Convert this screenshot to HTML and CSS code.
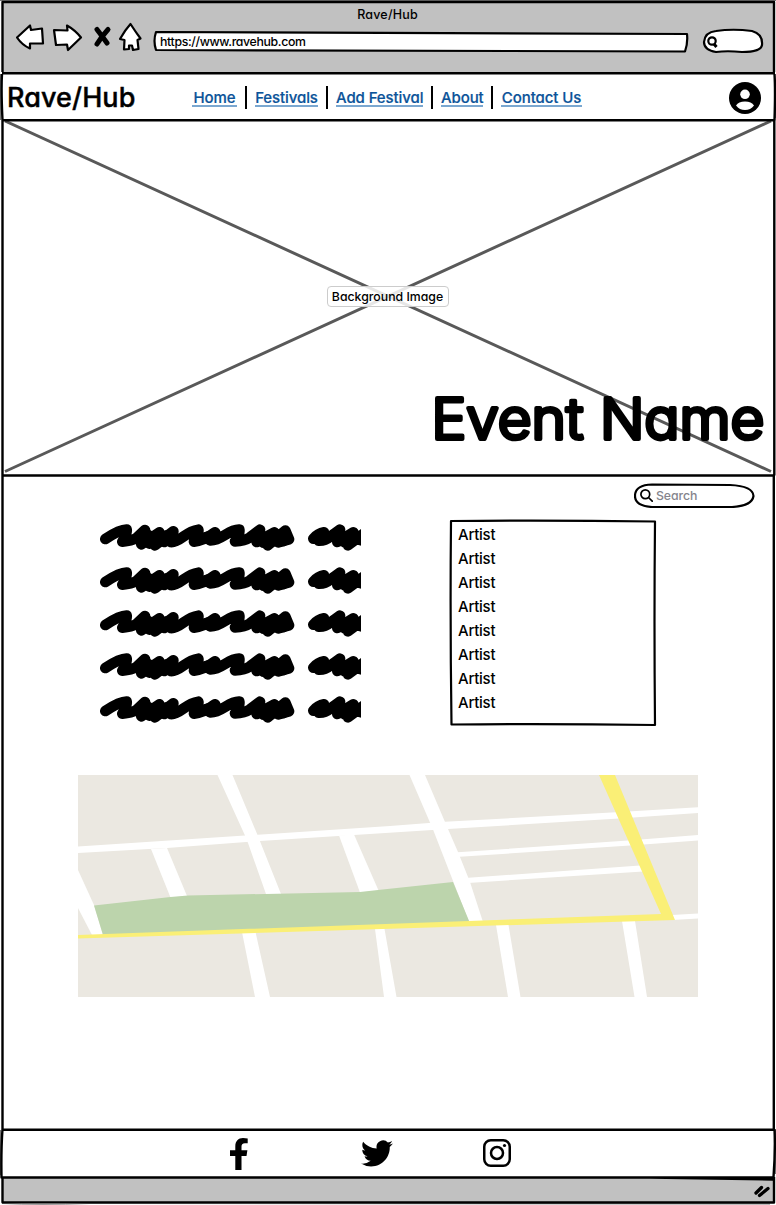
FILE: index.html
```html
<!DOCTYPE html>
<html lang="en">
<head>
<meta charset="utf-8">
<title>Rave/Hub</title>
<link rel="stylesheet" href="styles.css">
</head>
<body>
<div class="window">
  <header class="chrome">
    <div class="chrome-title">Rave/Hub</div>
    <div class="toolbar">
      <svg class="tools" viewBox="0 0 134 34" width="134" height="34" fill="#fff" stroke="#000" stroke-width="2.2" stroke-linejoin="round">
        <path d="M1 17.500L14 5.500L15 10L26 8.500L27 23.500L14 23.500V28.500Q6 25 1 17.500Z"/>
        <path d="M38 10L51.500 10.500L51 5.500Q59 10 65 17.500L52 30L51 24.500L40 25Z"/>
        <path d="M81 9.500Q86 16 91 23M92 9.500Q86 16 81 24" fill="none" stroke-width="5" stroke-linecap="round"/>
        <path d="M114.500 4Q119 11 124.500 18.500L121.500 20L122.500 29L117 30L116 25.500H113V29L108 29.500L108.500 20L104 19Q109 10 114.500 4Z"/>
      </svg>
      <div class="address">
        <svg class="outline" viewBox="0 0 536 24" width="536" height="24"><path d="M3 2L534 4Q535 13 532 21.500L3 20Q0 11 3 2Z"/></svg>
        <span class="url">https://www.ravehub.com</span>
      </div>
      <svg class="quick" viewBox="0 0 62 26" width="62" height="26" fill="#fff" stroke="#000" stroke-width="2.200">
        <path d="M14 3Q31 .500 50 3Q61 6 60 17Q59 24 40 24Q25 22.500 14 24Q2 22 2 14Q3 4 14 3Z"/>
        <circle cx="10" cy="13" r="3.700"/><path d="M12 16L14.500 19" stroke-width="3"/>
      </svg>
    </div>
  </header>

  <nav class="nav">
    <div class="brand">Rave/Hub</div>
    <div class="links">
      <a class="link home">Home</a><i class="sep"></i>
      <a class="link festivals">Festivals</a><i class="sep"></i>
      <a class="link add">Add Festival</a><i class="sep"></i>
      <a class="link about">About</a><i class="sep"></i>
      <a class="link contact">Contact Us</a>
    </div>
    <svg class="avatar" viewBox="0 0 32 32" width="32" height="32"><circle cx="16" cy="16" r="16"/><circle cx="16" cy="12.300" r="4.800" fill="#fff"/><path d="M7 23.500Q9.500 19.500 16 19.500T25 23.500Q21.500 28 16 28T7 23.500Z" fill="#fff"/></svg>
  </nav>

  <section class="hero">
    <svg class="cross" viewBox="0 0 776 355" width="776" height="355"><path d="M5 0L771 350.500M771 0L5 350.500"/></svg>
    <span class="hero-label">Background Image</span>
    <svg class="hero-title" viewBox="0 0 344 80" width="344" height="80"><text x="3.500" y="58" textLength="333" lengthAdjust="spacingAndGlyphs">Event Name</text></svg>
  </section>

  <main class="content">
    <div class="search">
      <svg class="outline" viewBox="0 0 121 25" width="121" height="25"><path d="M18 1.500L96 2Q119 3 119.500 13Q118 23 98 24H18Q1 23 1 13Q1 2 18 1.500Z"/></svg>
      <svg class="lens" viewBox="0 0 13 13" width="13" height="13"><circle cx="5.300" cy="5.300" r="4.400"/><path d="M8.500 8.500L12.200 12.200"/></svg>
      <span class="hint">Search</span>
    </div>
    <div class="info">
      <svg class="scribbles" viewBox="30 42 783 597" width="261" height="199">
        <defs>
          <g id="scribble">
            <path d="M46 87Q90 58 110 59Q112 70 97 95Q125 92 138 85L165 60L154 103L208 67L195 106L250 64L242 96Q255 98 280 80Q304 62 325 59Q327 74 312 95Q342 92 375 67L360 91Q378 92 405 75Q432 58 448 59Q450 76 435 94Q464 93 480 82L510 59L500 96L553 67L533 106L586 62L597 88L565 97"/>
            <path d="M148 84L175 75L178 101L205 90L223 96L230 76M340 84L365 77M497 81L518 79L520 98L545 91L570 75L580 93"/>
            <path d="M670 86Q684 70 702 67L686 92Q705 93 721 80L750 59L742 96L790 67L774 106L825 68L815 91L780 82L765 98L756 77M677 86L705 75"/>
          </g>
        </defs>
        <use href="#scribble"/><use href="#scribble" y="129"/><use href="#scribble" y="258"/><use href="#scribble" y="387"/><use href="#scribble" y="516"/>
      </svg>
      <div class="artists">
        <svg class="outline" viewBox="0 0 208 208" width="208" height="208"><path d="M2 2Q100 1 206 2.500Q205 100 206 206Q100 204.500 2.500 205.500Q1 100 2 2Z"/></svg>
        <ul class="list"><li>Artist</li><li>Artist</li><li>Artist</li><li>Artist</li><li>Artist</li><li>Artist</li><li>Artist</li><li>Artist</li></ul>
      </div>
    </div>
    <svg class="map" viewBox="0 0 620 222" width="620" height="222">
      <path fill="#ebe8e1" d="M0 0H620V222H0Z"/>
      <g fill="#fff">
        <path d="M0 71.500L167 60.500L312 51L367 46.700L538 37.300L620 32.300V38L541 43.500L370 54L182 66L89 73L0 78Z"/>
        <path d="M139.500 0H154.500L179.500 60L203 119H188L170 68L167 60.500Z"/>
        <path d="M73 74L89 73L109 121L92.500 122.500Z"/>
        <path d="M261 60.500L276 59.500L300.500 115.500L282 117.500Z"/>
        <path d="M0 95L16 130L25 160H14L0 133Z"/>
        <path d="M331.500 0H347L367 47L370 54L380 77L392 107L405 147H391L355 54.500Z"/>
        <path d="M376 77.500L550 65.500L620 60V65.500L552 70.500L378 82Z"/>
        <path d="M387 103L562 90.500L577 95.500L565 96.500L390 108Z"/>
        <path d="M594 140L620 138.500V143.500L594 145Z"/>
        <path d="M164 157H177.500L192 222H177ZM297 154H306.500L318.500 222H306ZM418 150H430.500L442.500 222H430ZM544 146H557L569 222H556.500Z"/>
      </g>
      <path fill="#bcd4ac" d="M16 130.500L92.500 122L110 120.500L282 117L300 115L375 107L391.500 147L25 160Z"/>
      <path fill="#faef76" d="M521 0H537L597 145L0 163.500V160L583 139Z"/>
    </svg>
  </main>

  <footer class="social">
    <svg class="fb" viewBox="0 0 18 32" width="18" height="32"><path d="M5.300 32V18H0V12.300H5.300V8.500C5.300 3 8.300 0 13 0Q15.800 0 17.700.400V5.300H15C12.300 5.300 11.500 6.600 11.500 8.500V12.300H17.400L16.500 18H11.500V32Z"/></svg>
    <svg class="tw" viewBox="0 2 24 20" width="32" height="27"><path d="M23.950 4.570a10 10 0 0 1-2.820.770 4.960 4.960 0 0 0 2.160-2.720c-.950.550-2 .950-3.130 1.180a4.920 4.920 0 0 0-8.380 4.480C7.690 8.090 4.070 6.130 1.640 3.160a4.820 4.820 0 0 0-.660 2.480c0 1.710.870 3.210 2.190 4.100a4.900 4.900 0 0 1-2.230-.620v.060a4.920 4.920 0 0 0 3.950 4.830 5 5 0 0 1-2.210.080 4.940 4.940 0 0 0 4.600 3.420A9.870 9.870 0 0 1 0 19.540a13.990 13.990 0 0 0 7.560 2.210c9.050 0 14-7.500 14-13.990l-.020-.630a9.940 9.940 0 0 0 2.410-2.560Z"/></svg>
    <svg class="ig" viewBox="0 0 28 28" width="28" height="28" fill="none" stroke="#000" stroke-width="2.500"><rect x="1.250" y="1.250" width="25.500" height="25.500" rx="6.500"/><circle cx="14" cy="14" r="6"/><circle cx="21.500" cy="6.500" r="1.600" fill="#000" stroke="none"/></svg>
  </footer>
  <div class="status">
    <svg class="grip" viewBox="0 0 18 14" width="18" height="14"><path d="M3 9L8.500 3.500M6.500 11.500L15 4.500"/></svg>
  </div>

  <svg class="frame" viewBox="0 0 776 1205" width="776" height="1205">
    <path class="soft" d="M0 .500H776M2 1203.500Q40 1205 90 1203.500L770 1204M.500 74V120M.500 1130V1175M775.500 80V118M775.500 1130V1174"/>
    <path d="M2.500 72V2H774V72M2 73.200H775M2 74Q1 90 2.500 120.300H774.500Q775.500 90 774.500 74M2.500 120V475.500M774.300 120V475.500M2.500 475.500H775M2.500 475V1130M773.800 475V1130M1.500 1129.700H774.500M2.500 1129Q1 1150 1.500 1177.500H773.500Q775.500 1150 774.500 1129M2.500 1177V1202.300L774 1202.500V1177M650 1177.500L773 1179.500"/>
  </svg>
</div>
</body>
</html>
```
FILE: styles.css
```css
* { box-sizing: border-box; }
body { margin: 0; background: #fff; color: #000; font-family: Inter, "Liberation Sans", sans-serif; font-feature-settings: "cv11"; font-weight: 500; }
svg { display: block; flex: none; }
.window { position: relative; width: 776px; height: 1205px; display: flex; flex-direction: column; overflow: hidden; padding: 2px 1px 2px 2px; }
.frame { position: absolute; left: 0; top: 0; pointer-events: none; }
.frame path { fill: none; stroke: #000; stroke-width: 2.4; stroke-linejoin: round; }
.frame .soft { stroke: #777; stroke-width: 1; }
.outline { position: absolute; left: 0; top: 0; }
.outline path { fill: #fff; stroke: #000; stroke-width: 2.2; stroke-linejoin: round; }

.chrome { height: 71px; background: #c1c1c1; padding-top: 4px; }
.chrome-title { height: 17px; line-height: 17px; font-size: 12.5px; letter-spacing: .2px; text-align: center; padding-right: 2px; }
.toolbar { display: flex; align-items: flex-start; padding: 0 11px 0 14px; margin-top: -3px; }
.tools { margin: 0 2px 0 0; }
.address { position: relative; width: 536px; height: 24px; margin: 10px 14px 0 1px; }
.url { position: relative; display: block; padding-left: 7px; line-height: 24px; font-size: 12.3px; letter-spacing: -.35px; white-space: nowrap; }
.quick { margin-top: 8px; }

.nav { height: 47px; display: flex; align-items: center; padding: 0 14px 0 5px; }
.brand { width: 184px; font-size: 27px; letter-spacing: .1px; line-height: 46px; padding-top: 3px; white-space: nowrap; -webkit-text-stroke: .4px #000; }
.links { display: flex; align-items: center; gap: 8px; padding-top: 1px; margin-left: 1px; }
.link { display: block; height: 19px; line-height: 19px; font-size: 15px; letter-spacing: -.1px; color: #0b5399; -webkit-text-stroke: .2px #0b5399; border-bottom: 2px solid #7aa7d0; white-space: nowrap; text-align: center; }
.home { width: 45px; }
.festivals { width: 63px; }
.add { width: 87px; }
.about { width: 42px; }
.contact { width: 81px; }
.sep { width: 2px; height: 23px; background: #000; }
.avatar { margin: 2px 0 0 auto; }

.hero { position: relative; height: 355px; display: flex; flex-direction: column; align-items: center; }
.cross { position: absolute; left: -2px; top: 1px; }
.cross path { stroke: #595959; stroke-width: 3; }
.hero-label { position: relative; width: 122px; height: 21px; margin: 166px 2px 0 0; border: 1px solid #ccc; border-radius: 4px; background: rgba(255,255,255,.85); font-size: 12.3px; line-height: 19px; text-align: center; white-space: nowrap; }
.hero-title { position: relative; align-self: flex-end; margin: 74px 3px 0 0; }
.hero-title text { font-size: 56px; font-weight: 300; stroke: #000; stroke-width: 4px; stroke-linejoin: round; }

.content { height: 654px; display: flex; flex-direction: column; }
.search { position: relative; align-self: flex-end; width: 121px; height: 25px; margin: 8px 20px 0 0; display: flex; align-items: center; padding-left: 6px; gap: 3px; }
.lens { position: relative; fill: none; stroke: #000; stroke-width: 1.7; stroke-linecap: round; }
.hint { position: relative; font-size: 12.3px; letter-spacing: -.1px; color: #85858d; }
.info { display: flex; padding: 12px 0 0 98px; height: 219px; }
.scribbles { margin-top: 4px; fill: none; stroke: #000; stroke-width: 32; stroke-linecap: round; stroke-linejoin: round; }
.artists { position: relative; width: 208px; height: 208px; margin: -1px 0 0 88px; }
.list { position: relative; list-style: none; margin: 0; padding: 4px 0 0 9px; font-size: 15px; letter-spacing: -.25px; line-height: 24px; }
.map { margin: 48px 0 0 76px; }

.social { height: 48px; display: flex; align-items: flex-start; padding: 9px 0 0 228px; }
.tw { margin: 2px 0 0 113px; }
.ig { margin: 1px 0 0 90px; }
.status { flex: 1; background: #c1c1c1; display: flex; justify-content: flex-end; padding: 7px 4px 0 0; }
.grip { fill: none; stroke: #000; stroke-width: 3.3; stroke-linecap: round; }
```
